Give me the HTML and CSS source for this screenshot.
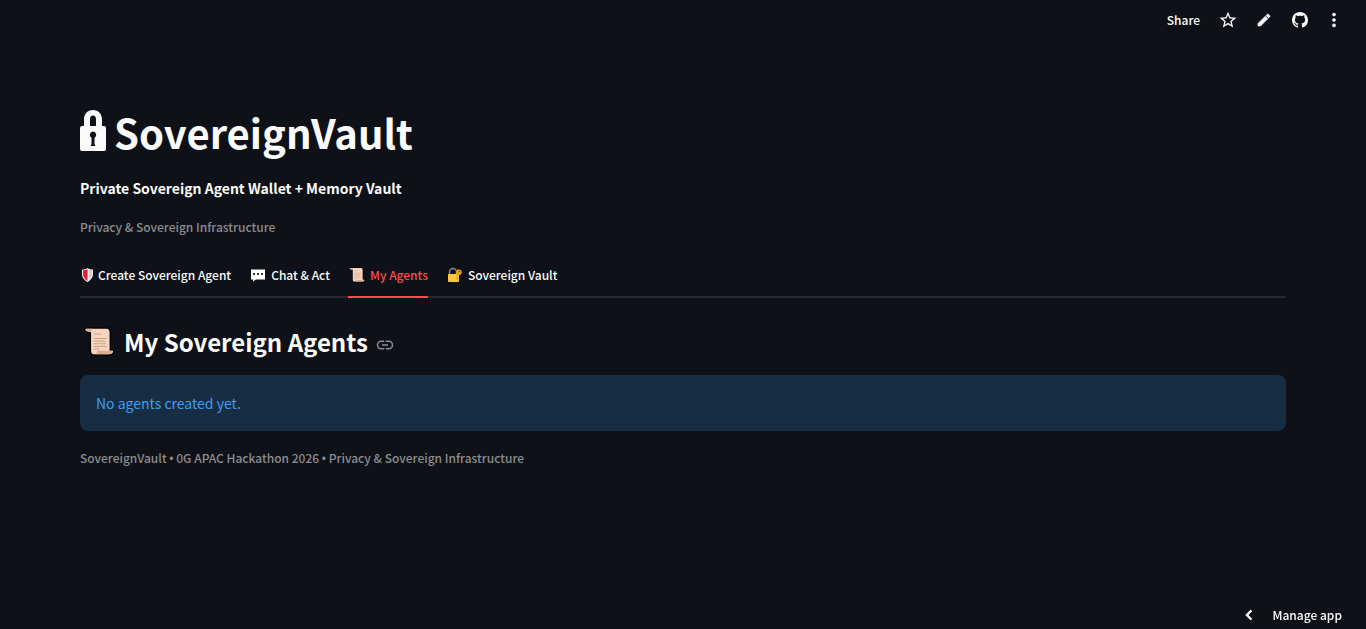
FILE: index.html
```html
<!DOCTYPE html>
<html lang="en">
<head>
  <meta charset="UTF-8">
  <meta name="viewport" content="width=device-width, initial-scale=1.0">
  <title>SovereignVault</title>
  <link rel="stylesheet" href="styles.css">
</head>
<body>
  <header class="toolbar">
    <button class="share">Share</button>
    <button class="icon-button" aria-label="Favorite">
      <svg width="20" height="20" viewBox="0 0 24 24" fill="currentColor"><path d="M22 9.24l-7.19-.62L12 2 9.19 8.63 2 9.24l5.46 4.73L5.82 21 12 17.27 18.18 21l-1.63-7.03L22 9.24zM12 15.4l-3.76 2.27 1-4.28-3.32-2.88 4.38-.38L12 6.1l1.71 4.04 4.38.38-3.32 2.88 1 4.28L12 15.4z"/></svg>
    </button>
    <button class="icon-button" aria-label="Edit">
      <svg width="16" height="16" viewBox="0 0 24 24" fill="currentColor"><path d="M3 17.25V21h3.75L17.81 9.94l-3.75-3.75L3 17.25zM20.71 7.04a1 1 0 0 0 0-1.41l-2.34-2.34a1 1 0 0 0-1.41 0l-1.83 1.83 3.75 3.75 1.83-1.83z" stroke="currentColor"/></svg>
    </button>
    <button class="icon-button" aria-label="View source">
      <svg width="16" height="16" viewBox="0 0 16 16" fill="currentColor"><path d="M8 0C3.58 0 0 3.58 0 8c0 3.54 2.29 6.53 5.47 7.59.4.07.55-.17.55-.38 0-.19-.01-.82-.01-1.49-2.01.37-2.53-.49-2.69-.94-.09-.23-.48-.94-.82-1.13-.28-.15-.68-.52-.01-.53.63-.01 1.08.58 1.23.82.72 1.21 1.87.87 2.33.66.07-.52.28-.87.51-1.07-1.78-.2-3.64-.89-3.64-3.95 0-.87.31-1.59.82-2.15-.08-.2-.36-1.02.08-2.12 0 0 .67-.21 2.2.82.64-.18 1.32-.27 2-.27s1.36.09 2 .27c1.53-1.04 2.2-.82 2.2-.82.44 1.1.16 1.92.08 2.12.51.56.82 1.27.82 2.15 0 3.07-1.87 3.75-3.65 3.95.29.25.54.73.54 1.48 0 1.07-.01 1.93-.01 2.2 0 .21.15.46.55.38A8.01 8.01 0 0 0 16 8c0-4.42-3.58-8-8-8z"/></svg>
    </button>
    <button class="icon-button menu" aria-label="Menu">
      <svg width="20" height="20" viewBox="0 0 24 24" fill="currentColor"><circle cx="12" cy="5.5" r="2.2"/><circle cx="12" cy="12" r="2.2"/><circle cx="12" cy="18.5" r="2.2"/></svg>
    </button>
  </header>

  <main class="container">
    <h1>
      <svg class="lock" width="26" height="42" viewBox="0 0 26 42" fill="currentColor"><path fill-rule="evenodd" d="M4 16V9.500C4 4 7.500 0 13 0s9 4 9 9.500V16h2a2 2 0 0 1 2 2v21a2 2 0 0 1-2 2H2a2 2 0 0 1-2-2V18a2 2 0 0 1 2-2zM10 16h6V9.500C16 7 15 5.500 13 5.500S10 7 10 9.500zM13 21.500a3.500 3.500 0 0 0-1.500 6.500v6L10.500 36h5l-1-2v-6A3.500 3.500 0 0 0 13 21.500z"/></svg>
      SovereignVault
    </h1>
    <p class="tagline">Private Sovereign Agent Wallet + Memory Vault</p>
    <p class="caption">Privacy &amp; Sovereign Infrastructure</p>

    <div class="tabs" role="tablist">
      <button class="tab" role="tab" aria-selected="false">
        <svg width="14" height="16" viewBox="0 0 14 16"><path d="M7.500 1C9 2 11 2.500 13 2.500V7c0 4-3 6.500-5.500 8C5 13.500 2 11 2 7V2.500C4 2.500 6 2 7.500 1z" fill="#f2f2f2"/><path d="M7.500 2V14C5 12.500 3 10 3 7V3.300c1.700 0 3.200-.3 4.500-1.300z" fill="#e8192c"/><path d="M9 3V13c1.800-1.500 3-3.500 3-6V3.500c-1 0-2-.1-3-.5z" fill="#d0d0d0"/></svg>
        Create Sovereign Agent
      </button>
      <button class="tab" role="tab" aria-selected="false">
        <svg width="18" height="16" viewBox="0 0 18 16"><path d="M2 2.500h14v10H7l-3 2v-2H2z" fill="#fff"/><path d="M4 6h2v2H4zM8 6h2v2H8zM12 6h2v2h-2z" fill="#333"/></svg>
        Chat &amp; Act
      </button>
      <button class="tab active" role="tab" aria-selected="true">
        <svg width="18" height="16" viewBox="0 0 34 34"><use href="#scroll"/></svg>
        My Agents
      </button>
      <button class="tab" role="tab" aria-selected="false">
        <svg width="18" height="16" viewBox="0 0 18 16"><path d="M3.500 8V5a3.500 3.500 0 0 1 7 0v3" fill="none" stroke="#8d8a80" stroke-width="1.500"/><rect x="2" y="7" width="11" height="8" rx="1" fill="#ffc83d"/><path d="M13 2.500a2.800 2.800 0 1 1-1 5.400V14l-1.500-1.500V7A2.800 2.800 0 0 1 13 2.500z" fill="#e8a21c"/><circle cx="13.500" cy="4.500" r=".8" fill="#5d4410"/></svg>
        Sovereign Vault
      </button>
    </div>

    <section>
      <h2>
        <svg class="scroll" width="30" height="30" viewBox="0 0 34 34">
          <g id="scroll">
            <path d="M4 4C2 4 1 2 2 1h24c2 0 3 2 3 4v21h4c0 3-2 4-4 4H11c-2 0-3-2-3-4V5z" transform="translate(0 1)" fill="#f6d6c3" stroke="#000" stroke-width="3" paint-order="stroke"/>
            <path d="M3 2h7c-2 1-2 2-2 4-3 0-5-1-5-4zM15 27h17c0 3-2 4-4 4H11c2 0 4-1 4-4z" fill="#d9ad90"/>
            <path d="M11 8h8M11 13h15M11 16h13M11 19h14M11 22h15M11 25h6" stroke="#c79a73" stroke-width="1"/>
          </g>
        </svg>
        My Sovereign Agents
        <a class="anchor" href="#" aria-label="Link to heading">
          <svg width="18" height="18" viewBox="0 0 24 24" fill="none" stroke="currentColor" stroke-width="2"><path d="M11 7H7a5 5 0 0 0 0 10h4M13 7h4a5 5 0 0 1 0 10h-4M8 12h8"/></svg>
        </a>
      </h2>
      <div class="alert" role="alert">No agents created yet.</div>
    </section>

    <footer class="caption">SovereignVault <span class="dot">•</span> 0G APAC Hackathon 2026 <span class="dot">•</span> Privacy &amp; Sovereign Infrastructure</footer>
  </main>

  <button class="manage-app">
    <svg width="20" height="20" viewBox="0 0 24 24" fill="currentColor"><path d="M15.400 7.400L14 6l-6 6 6 6 1.400-1.400L10.800 12z" stroke="currentColor"/></svg>
    Manage app
  </button>
</body>
</html>
```

FILE: styles.css
```css
* {
  box-sizing: border-box;
}

body {
  margin: 0;
  min-height: 100vh;
  background-color: #0e1117;
  color: #fafafa;
  font-family: "Source Sans Pro", "Noto Sans CJK SC", sans-serif;
  font-size: 14px;
  line-height: 24px;
}

h1, h2, p {
  margin: 0;
}

button {
  padding: 0;
  border: none;
  background: none;
  color: inherit;
  font: inherit;
  cursor: pointer;
}

svg {
  display: block;
  flex-shrink: 0;
}

/* Top toolbar */
.toolbar {
  display: flex;
  justify-content: flex-end;
  align-items: center;
  height: 40px;
  padding-right: 16px;
}

.share {
  margin-right: 10px;
  font-size: 12px;
  font-weight: 500;
}

.icon-button {
  display: flex;
  justify-content: center;
  align-items: center;
  width: 36px;
  height: 36px;
}

.icon-button.menu {
  width: 32px;
}

/* Page content */
.container {
  padding: 56px 80px 80px;
}

h1 {
  display: flex;
  align-items: center;
  gap: 8px;
  height: 72px;
  font-size: 40px;
  font-weight: 700;
}

.lock {
  margin-bottom: 2px;
}

.tagline {
  margin-top: 8px;
  font-weight: 700;
}

.caption {
  margin-top: 16px;
  color: #8b8c8f;
  font-size: 12px;
  font-weight: 500;
  line-height: 22px;
}

.dot {
  font-family: "Liberation Sans", sans-serif;
}

.tabs {
  display: flex;
  gap: 18px;
  margin-top: 16px;
  border-bottom: 2px solid #262930;
}

.tab {
  display: flex;
  align-items: center;
  gap: 4px;
  height: 44px;
  margin-bottom: -2px;
  border-bottom: 2px solid transparent;
  font-size: 12px;
  font-weight: 500;
  white-space: nowrap;
}

.tab.active {
  color: #ff4b4b;
  border-bottom-color: #ff4b4b;
}

h2 {
  display: flex;
  align-items: center;
  height: 60px;
  margin: 14px 0 3px;
  font-size: 24px;
  font-weight: 600;
}

.scroll {
  margin: 0 10px 0 4px;
}

.anchor {
  margin: 6px 0 0 8px;
  color: #8b8c8f;
}

.alert {
  padding: 16px;
  border-radius: 8px;
  background-color: #172d43;
  color: #3d9df3;
}

.manage-app {
  position: fixed;
  right: 24px;
  bottom: 2px;
  display: flex;
  align-items: center;
  gap: 14px;
  font-size: 12px;
  font-weight: 500;
}
```
